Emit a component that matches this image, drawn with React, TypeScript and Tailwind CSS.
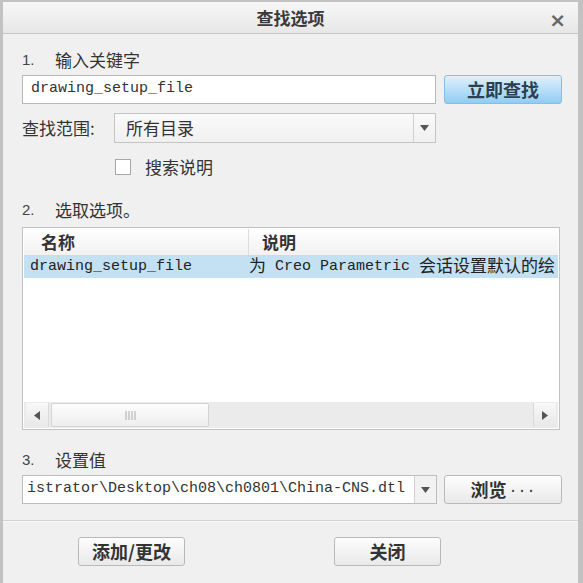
import React from "react";

const cjk = "font-['Noto_Sans_CJK_SC','Noto_Sans',sans-serif]";
const mono = "font-['Liberation_Mono','Noto_Sans_CJK_SC',monospace]";

function Arrow({ dir = "down" }: { dir?: "down" | "left" | "right" }) {
  if (dir === "down")
    return (
      <svg width="9" height="6" viewBox="0 0 9 6">
        <path d="M0 0H9L4.5 6Z" fill="#555" />
      </svg>
    );
  if (dir === "left")
    return (
      <svg width="6" height="9" viewBox="0 0 6 9">
        <path d="M6 0V9L0 4.5Z" fill="#555" />
      </svg>
    );
  return (
    <svg width="6" height="9" viewBox="0 0 6 9">
      <path d="M0 0V9L6 4.5Z" fill="#555" />
    </svg>
  );
}

export default function App() {
  const cj = `text-[17px] leading-[22px] -translate-y-[2px] ${cjk}`;
  return (
    <div className="w-[583px] h-[583px] overflow-hidden bg-[#c2c2c2] pl-[3px] pt-[2px] pr-[5px]">
      <div className={`flex h-full flex-col bg-[#f0f0f0] text-[#333] ${cjk}`}>
        {/* title bar */}
        <div className="relative flex h-[32px] shrink-0 items-center justify-center border-b border-[#c6c6c6] bg-gradient-to-b from-[#f7f7f7] to-[#e7e7e7]">
          <span className="text-[17px] font-bold text-[#3a3a3a]">查找选项</span>
          <span className="absolute right-[12px] top-[3px] text-[20px] font-bold text-[#666] font-['DejaVu_Sans',sans-serif]">×</span>
        </div>

        <div className="flex flex-col pl-[19px] pr-[16px]">
          {/* 1. */}
          <div className="mt-[13px] flex h-[26px] items-center">
            <span className="w-[33px] text-[15px] text-[#444] font-['Liberation_Sans',sans-serif]">1.</span>
            <span className="text-[17px]">输入关键字</span>
          </div>
          <div className="mt-[2px] flex h-[29px] items-stretch">
            <div className={`flex w-[414px] items-center border border-[#b8b8b8] bg-white pl-[8px] text-[15px] text-[#333] ${mono}`}>
              drawing_setup_file
            </div>
            <div className="ml-[8px] flex w-[118px] items-center justify-center rounded-[3px] border border-[#8cbde0] bg-gradient-to-b from-[#dff1fc] to-[#8fcdf2] text-[18px] font-bold text-[#2d3f52]">
              立即查找
            </div>
          </div>

          {/* 查找范围 */}
          <div className="mt-[9px] flex h-[30px] items-stretch">
            <span className="flex w-[92px] items-center text-[17px]">查找范围:</span>
            <div className="flex w-[322px] items-stretch border border-[#c4c4c4] bg-gradient-to-b from-[#fafafa] to-[#f0f0f0]">
              <span className="flex flex-1 items-center pl-[11px] text-[17px]">所有目录</span>
              <span className="flex w-[22px] items-center justify-center border-l border-[#d0d0d0]">
                <Arrow />
              </span>
            </div>
          </div>

          {/* checkbox */}
          <div className="mt-[12px] flex h-[24px] items-center pl-[93px]">
            <span className="h-[16px] w-[16px] border border-[#a8a8a8] bg-white" />
            <span className="ml-[14px] text-[17px]">搜索说明</span>
          </div>

          {/* 2. */}
          <div className="mt-[18px] flex h-[26px] items-center">
            <span className="w-[33px] text-[15px] text-[#444] font-['Liberation_Sans',sans-serif]">2.</span>
            <span className="text-[17px]">选取选项。</span>
          </div>

          {/* list */}
          <div className="mt-[4px] flex h-[203px] w-[538px] flex-col border border-[#c2c2c2] bg-white p-[1px]">
            <div className="flex h-[27px] shrink-0 border-b border-[#d8d8d8] bg-gradient-to-b from-[#ffffff] to-[#f1f1f1]">
              <div className="flex w-[225px] items-end border-r border-[#dcdcdc] pl-[17px] pb-[1px] text-[17px] font-bold text-[#333]">
                名称
              </div>
              <div className="flex flex-1 items-end pl-[13px] pb-[1px] text-[17px] font-bold text-[#333]">
                说明
              </div>
            </div>
            <div className={`flex h-[22px] shrink-0 items-center overflow-hidden whitespace-nowrap bg-[#c3e1f3] text-[15px] leading-[22px] text-[#222] ${mono}`}>
              <span className="w-[225px] shrink-0 pl-[6px]">drawing_setup_file</span>
              <span className={cj}>为</span>
              <span className="whitespace-pre"> Creo Parametric </span>
              <span className={cj}>会话设置默认的绘</span>
            </div>
            <div className="flex-1" />
            {/* scrollbar */}
            <div className="flex h-[26px] shrink-0 items-stretch bg-[#ebebeb] px-[2px] py-[1px]">
              <div className="flex w-[23px] items-center justify-center border-r border-[#dadada] bg-gradient-to-b from-[#f8f8f8] to-[#e8e8e8]">
                <Arrow dir="left" />
              </div>
              <div className="ml-[2px] flex w-[158px] items-center justify-center rounded-[2px] border border-[#d4d4d4] bg-gradient-to-b from-[#fdfdfd] to-[#eeeeee]">
                <svg width="11" height="9" viewBox="0 0 11 9">
                  <path d="M1 0V9M4 0V9M7 0V9M10 0V9" stroke="#aaa" strokeWidth="1" />
                </svg>
              </div>
              <div className="flex-1" />
              <div className="flex w-[23px] items-center justify-center border-l border-[#dadada] bg-gradient-to-b from-[#f8f8f8] to-[#e8e8e8]">
                <Arrow dir="right" />
              </div>
            </div>
          </div>

          {/* 3. */}
          <div className="mt-[17px] flex h-[26px] items-center">
            <span className="w-[33px] text-[15px] text-[#444] font-['Liberation_Sans',sans-serif]">3.</span>
            <span className="text-[17px]">设置值</span>
          </div>
          <div className="mt-[2px] flex h-[29px] items-stretch">
            <div className="flex w-[415px] items-stretch border border-[#bdbdbd] bg-white">
              <span className={`flex flex-1 items-center overflow-hidden whitespace-nowrap pl-[4px] text-[15px] text-[#333] ${mono}`}>
                istrator\Desktop\ch08\ch0801\China-CNS.dtl
              </span>
              <span className="flex w-[22px] items-center justify-center border-l border-[#d0d0d0] bg-[#f2f2f2]">
                <Arrow />
              </span>
            </div>
            <div className="ml-[7px] flex w-[118px] items-center justify-center rounded-[3px] border border-[#b9b9b9] bg-gradient-to-b from-[#fdfdfd] to-[#e9e9e9] text-[18px] font-bold text-[#333]">
              浏览<span className="ml-[2px] font-normal font-['Liberation_Mono',monospace] text-[15px]">...</span>
            </div>
          </div>
        </div>

        {/* separator */}
        <div className="mt-[16px] border-t border-[#d2d2d2] border-b border-b-[#fafafa]" />

        {/* bottom buttons */}
        <div className="mt-[15px] flex pl-[75px]">
          <div className="flex h-[29px] w-[107px] items-center justify-center rounded-[3px] border border-[#b9b9b9] bg-gradient-to-b from-[#fdfdfd] to-[#e9e9e9] text-[18px] font-bold text-[#333]">
            添加/更改
          </div>
          <div className="ml-[149px] flex h-[29px] w-[107px] items-center justify-center rounded-[3px] border border-[#b9b9b9] bg-gradient-to-b from-[#fdfdfd] to-[#e9e9e9] text-[18px] font-bold text-[#333]">
            关闭
          </div>
        </div>
      </div>
    </div>
  );
}
